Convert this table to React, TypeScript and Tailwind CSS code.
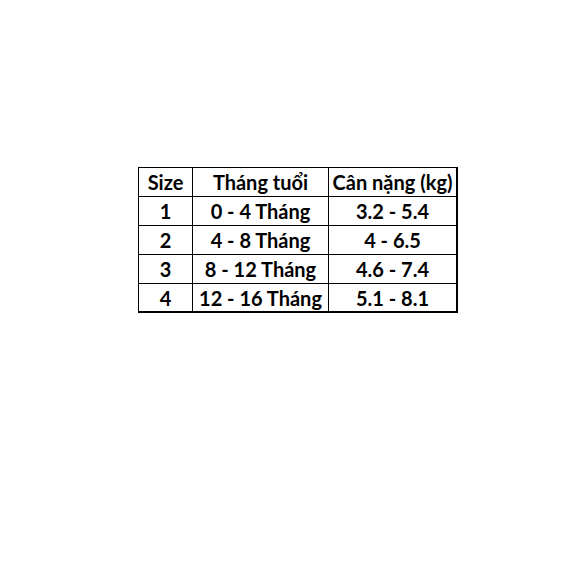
const rows = [
  ["1", "0 - 4 Tháng", "3.2 - 5.4"],
  ["2", "4 - 8 Tháng", "4 - 6.5"],
  ["3", "8 - 12 Tháng", "4.6 - 7.4"],
  ["4", "12 - 16 Tháng", "5.1 - 8.1"],
];

const App = () => {
  return (
    <div className="w-[580px] h-[580px] bg-white pt-[167px] pl-[138px]" style={{ fontFamily: "Lato, 'Noto Sans', sans-serif" }}>
      <div className="w-[320px] border-l border-t border-black border-r-2 border-b-2">
        <div className="grid grid-cols-[54px_136px_1fr] h-[29px] border-b border-black font-bold text-[20px] text-black leading-none">
          <div className="flex items-center justify-center border-r border-black">Size</div>
          <div className="flex items-center justify-center border-r border-black">Tháng tuổi</div>
          <div className="flex items-center justify-center">Cân nặng (kg)</div>
        </div>
        {rows.map((r, i) => (
          <div
            key={i}
            className={`grid grid-cols-[54px_136px_1fr] font-bold text-[20px] text-black leading-none ${i < rows.length - 1 ? "h-[29px] border-b border-black" : "h-[27px]"}`}
          >
            <div className="flex items-center justify-center border-r border-black">{r[0]}</div>
            <div className="flex items-center justify-center border-r border-black">{r[1]}</div>
            <div className="flex items-center justify-center">{r[2]}</div>
          </div>
        ))}
      </div>
    </div>
  );
};

export default App;
